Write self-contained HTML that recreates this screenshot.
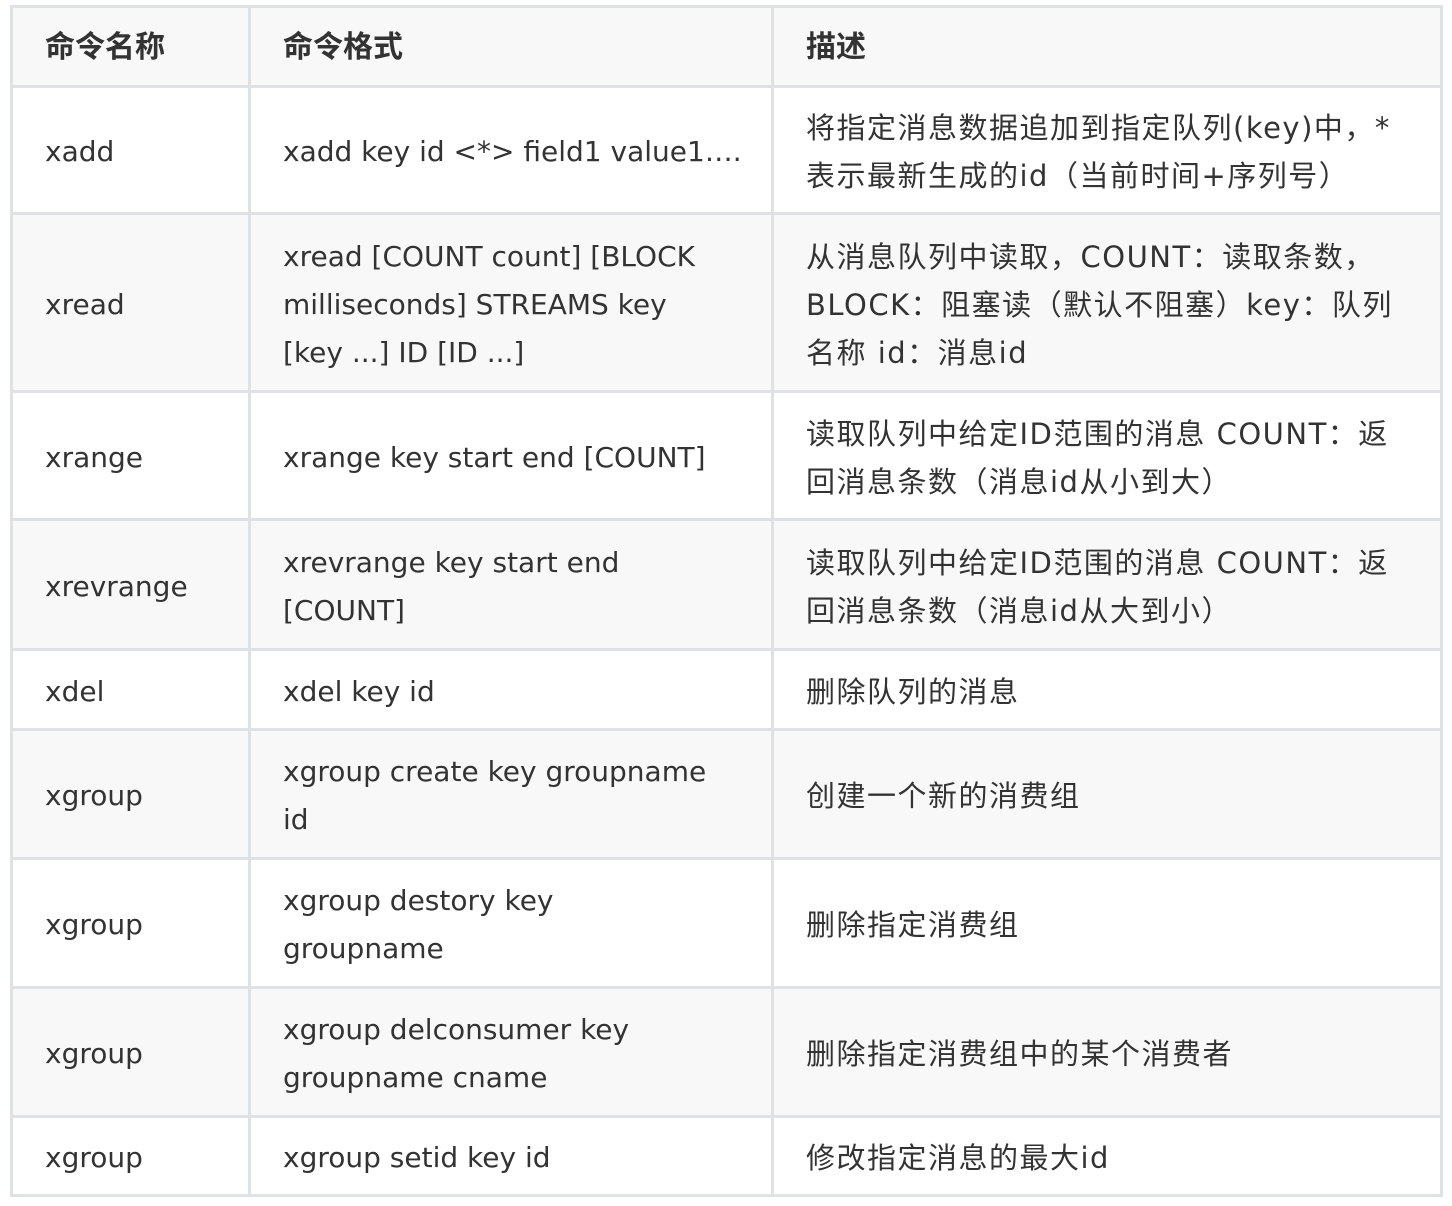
<!DOCTYPE html>
<html><head><meta charset="utf-8"><style>
body{margin:0;background:#fff;width:1452px;height:1206px;position:relative;overflow:hidden;font-family:"DejaVu Sans","Noto Sans CJK SC",sans-serif;color:#333;font-size:28px;}
.r{position:absolute;left:10px;width:1433px;border:3px solid #dfe2e5;box-sizing:border-box;}
.c{position:absolute;top:0;bottom:0;display:flex;align-items:center;padding-left:32px;padding-top:4px;box-sizing:border-box;line-height:48px;white-space:nowrap;}
.c1{left:0;width:238px;border-right:3px solid #dfe2e5;}
.c2{left:238px;width:523px;border-right:3px solid #dfe2e5;}
.c3{left:761px;right:0;font-size:29px;letter-spacing:1.5px;}
.g{background:#f8f8f8;}
.h{font-weight:bold;font-size:30px;}
.h .c{padding-top:2px;}
.h .c3{font-size:30px;letter-spacing:0;}
</style></head><body>
<div class="r g h" style="top:5px;height:83px"><div class="c c1">命令名称</div><div class="c c2">命令格式</div><div class="c c3">描述</div></div>
<div class="r" style="top:85px;height:130px"><div class="c c1">xadd</div><div class="c c2">xadd key id &lt;*&gt; field1 value1….</div><div class="c c3">将指定消息数据追加到指定队列(key)中，*<br>表示最新生成的id（当前时间+序列号）</div></div>
<div class="r g" style="top:212px;height:181px"><div class="c c1">xread</div><div class="c c2">xread [COUNT count] [BLOCK<br>milliseconds] STREAMS key<br>[key ...] ID [ID ...]</div><div class="c c3">从消息队列中读取，COUNT：读取条数，<br>BLOCK：阻塞读（默认不阻塞）key：队列<br>名称 id：消息id</div></div>
<div class="r" style="top:390px;height:131px"><div class="c c1">xrange</div><div class="c c2">xrange key start end [COUNT]</div><div class="c c3">读取队列中给定ID范围的消息 COUNT：返<br>回消息条数（消息id从小到大）</div></div>
<div class="r g" style="top:518px;height:133px"><div class="c c1">xrevrange</div><div class="c c2">xrevrange key start end<br>[COUNT]</div><div class="c c3">读取队列中给定ID范围的消息 COUNT：返<br>回消息条数（消息id从大到小）</div></div>
<div class="r" style="top:648px;height:83px"><div class="c c1">xdel</div><div class="c c2">xdel key id</div><div class="c c3">删除队列的消息</div></div>
<div class="r g" style="top:728px;height:132px"><div class="c c1">xgroup</div><div class="c c2">xgroup create key groupname<br>id</div><div class="c c3">创建一个新的消费组</div></div>
<div class="r" style="top:857px;height:132px"><div class="c c1">xgroup</div><div class="c c2">xgroup destory key<br>groupname</div><div class="c c3">删除指定消费组</div></div>
<div class="r g" style="top:986px;height:132px"><div class="c c1">xgroup</div><div class="c c2">xgroup delconsumer key<br>groupname cname</div><div class="c c3">删除指定消费组中的某个消费者</div></div>
<div class="r" style="top:1115px;height:82px"><div class="c c1">xgroup</div><div class="c c2">xgroup setid key id</div><div class="c c3">修改指定消息的最大id</div></div>
</body></html>
